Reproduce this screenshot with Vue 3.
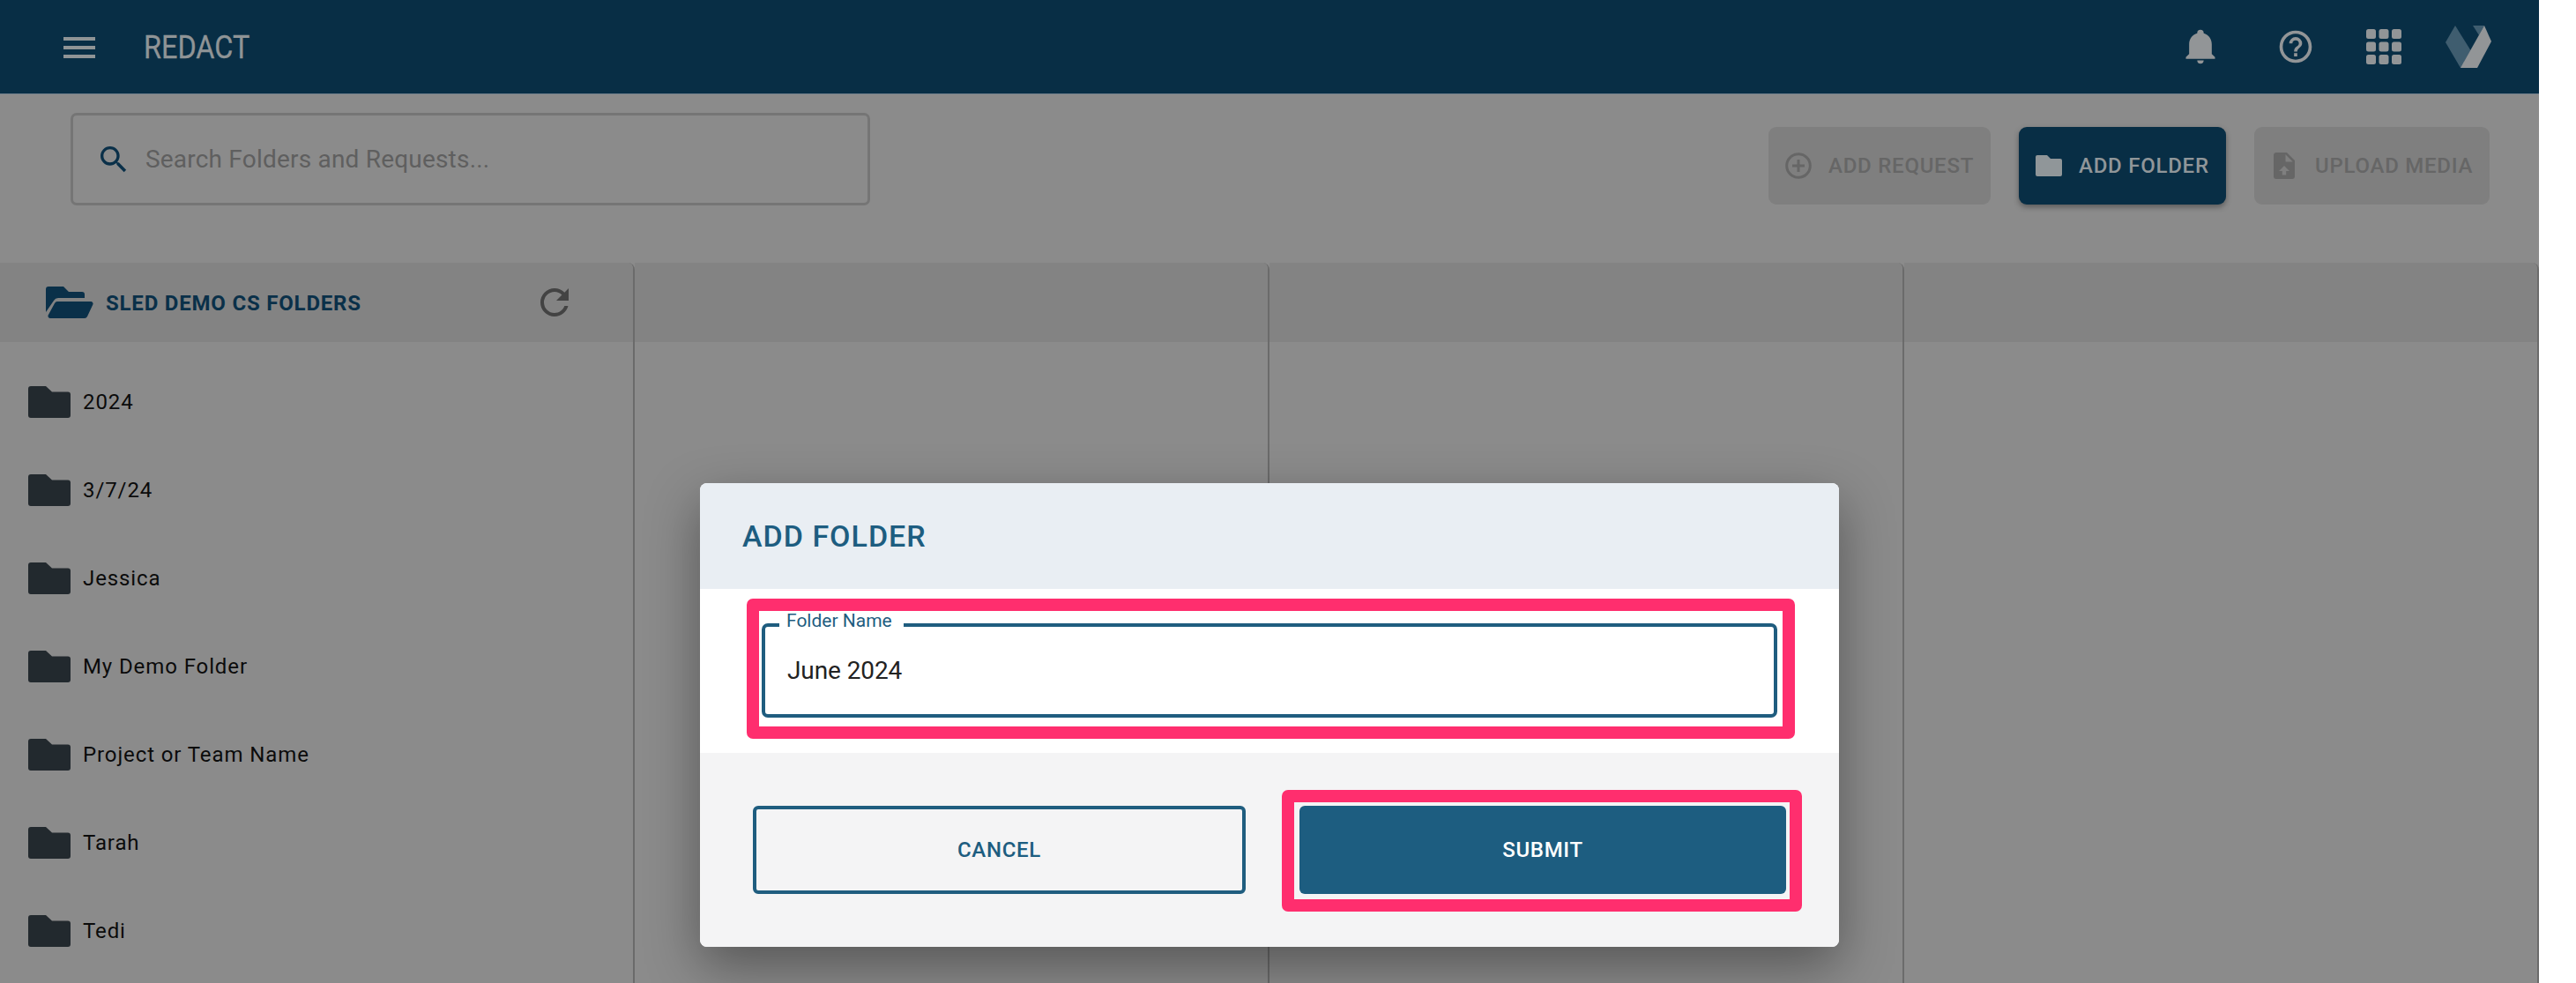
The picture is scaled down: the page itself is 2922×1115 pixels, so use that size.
<script setup>
const folders = ['2024', '3/7/24', 'Jessica', 'My Demo Folder', 'Project or Team Name', 'Tarah', 'Tedi']
const columns = [1, 2, 3]
const grid = [0, 1, 2]
</script>

<template>
  <div class="page">
    <header class="topbar">
      <div class="brand">
        <div class="burger"><span></span><span></span><span></span></div>
        <span class="title">REDACT</span>
      </div>
      <div class="top-icons">
        <svg class="bell" viewBox="0 0 24 24"><path d="M21,19V20H3V19L5,17V11C5,7.9 7.03,5.17 10,4.29C10,4.19 10,4.1 10,4A2,2 0 0,1 12,2A2,2 0 0,1 14,4C14,4.1 14,4.19 14,4.29C16.97,5.17 19,7.9 19,11V17L21,19M14,21A2,2 0 0,1 12,23A2,2 0 0,1 10,21"/></svg>
        <svg class="help" viewBox="0 0 24 24"><path d="M11,18H13V16H11V18M12,2A10,10 0 0,0 2,12A10,10 0 0,0 12,22A10,10 0 0,0 22,12A10,10 0 0,0 12,2M12,20C7.59,20 4,16.41 4,12C4,7.59 7.59,4 12,4C16.41,4 20,7.59 20,12C20,16.41 16.41,20 12,20M12,6A4,4 0 0,0 8,10H10A2,2 0 0,1 12,8A2,2 0 0,1 14,10C14,12 11,11.75 11,15H13C13,12.75 16,12.5 16,10A4,4 0 0,0 12,6Z"/></svg>
        <svg class="apps" viewBox="0 0 40 40">
          <template v-for="r in grid" :key="r">
            <rect v-for="c in grid" :key="c" :x="c * 14.5" :y="r * 14.5" width="11" height="11" rx="2.5"/>
          </template>
        </svg>
        <svg class="logo" viewBox="0 0 52 48">
          <polygon class="logo-dark" points="0,19 11,0 34,37 25,48 17,48"/>
          <polygon class="logo-dark" points="31,0 44,0 38,11"/>
          <polygon points="17,48 44,0 52,18 36,48"/>
        </svg>
      </div>
    </header>

    <section class="toolbar">
      <div class="search">
        <svg class="search-icon" viewBox="0 0 24 24"><path d="M9.5,3A6.5,6.5 0 0,1 16,9.5C16,11.11 15.41,12.59 14.44,13.73L14.71,14H15.5L20.5,19L19,20.5L14,15.5V14.71L13.73,14.44C12.59,15.41 11.11,16 9.5,16A6.5,6.5 0 0,1 3,9.5A6.5,6.5 0 0,1 9.5,3M9.5,5C7,5 5,7 5,9.5C5,12 7,14 9.5,14C12,14 14,12 14,9.5C14,7 12,5 9.5,5Z"/></svg>
        <span class="placeholder">Search Folders and Requests...</span>
      </div>
      <div class="actions">
        <div class="btn disabled btn-request">
          <svg class="ic-plus" viewBox="0 0 30 30"><circle cx="15" cy="15" r="13.3" fill="none" stroke="currentColor" stroke-width="3"/><path d="M15 8v14M8 15h14" stroke="currentColor" stroke-width="3"/></svg>
          <span>ADD REQUEST</span>
        </div>
        <div class="btn primary btn-folder">
          <svg class="ic-folder" viewBox="0 0 30 24"><path d="M2 0H13L17 4H28a2 2 0 0 1 2 2V22a2 2 0 0 1-2 2H2a2 2 0 0 1-2-2V2a2 2 0 0 1 2-2Z"/></svg>
          <span>ADD FOLDER</span>
        </div>
        <div class="btn disabled btn-upload">
          <svg class="ic-upload" viewBox="4 2 16 20"><path d="M13.5,16V19H10.5V16H8L12,12L16,16H13.5M13,9V3.5L18.5,9M6,2C4.89,2 4,2.89 4,4V20A2,2 0 0,0 6,22H18A2,2 0 0,0 20,20V8L14,2H6Z"/></svg>
          <span>UPLOAD MEDIA</span>
        </div>
      </div>
    </section>

    <main class="columns">
      <div class="column">
        <div class="col-head">
          <svg class="ic-open" viewBox="0 0 54 36">
            <path d="M3 0H20L26 6H41a3 3 0 0 1 3 3V13H14a6 6 0 0 0-5 3L0 29V3a3 3 0 0 1 3-3Z"/>
            <path d="M13 17H51a2.5 2.5 0 0 1 2.3 3.6L47 34a4 4 0 0 1-3 2H5a2.5 2.5 0 0 1-2.2-3.7L10 19a4 4 0 0 1 3-2Z"/>
          </svg>
          <span class="col-title">SLED DEMO CS FOLDERS</span>
          <svg class="ic-refresh" viewBox="0 0 24 24"><path d="M17.65,6.35C16.2,4.9 14.21,4 12,4A8,8 0 0,0 4,12A8,8 0 0,0 12,20C15.73,20 18.84,17.45 19.73,14H17.65C16.83,16.33 14.61,18 12,18A6,6 0 0,1 6,12A6,6 0 0,1 12,6C13.66,6 15.14,6.69 16.22,7.78L13,11H20V4L17.65,6.35Z"/></svg>
        </div>
        <ul class="list">
          <li v-for="name in folders" :key="name" class="row">
            <svg class="ic-row" viewBox="0 0 48 36"><path d="M3 0H20L27 6.5H45a3 3 0 0 1 3 3V33a3 3 0 0 1-3 3H3a3 3 0 0 1-3-3V3a3 3 0 0 1 3-3Z"/></svg>
            <span>{{ name }}</span>
          </li>
        </ul>
      </div>
      <div v-for="c in columns" :key="c" class="column">
        <div class="col-head"></div>
      </div>
    </main>

    <div class="overlay">
      <div class="dialog">
        <div class="dialog-head">ADD FOLDER</div>
        <div class="dialog-body">
          <div class="mark mark-field">
            <div class="field">
              <span class="field-label">Folder Name</span>
              <span class="field-value">June 2024</span>
            </div>
          </div>
        </div>
        <div class="dialog-foot">
          <div class="action cancel">CANCEL</div>
          <div class="mark mark-submit">
            <div class="action submit">SUBMIT</div>
          </div>
        </div>
      </div>
    </div>
  </div>
</template>

<style>
html, body { margin: 0; background: #fff; }
</style>

<style scoped>
.page {
  position: relative;
  width: 2880px;
  height: 1115px;
  overflow: hidden;
  background: #8b8b8b;
  font-family: Roboto, "Liberation Sans", sans-serif;
}
.topbar {
  height: 107px;
  box-sizing: border-box;
  background: #082e45;
  border-bottom: 1px solid #6f7f8b;
  display: flex;
  align-items: flex-start;
  justify-content: space-between;
  color: #8f9496;
}
.brand { display: flex; align-items: center; padding: 41px 0 0 72px; }
.burger { display: flex; flex-direction: column; gap: 6px; width: 36px; }
.burger span { display: block; height: 4px; background: #8f9496; }
.title {
  margin-left: 55px;
  font-size: 36px;
  line-height: 26px;
  transform: scaleX(0.9);
  transform-origin: left center;
  color: #8f9496;
  -webkit-text-stroke: 0.3px #8f9496;
}
.top-icons { position: relative; display: flex; align-items: flex-start; padding: 29px 54px 0 0; }
.top-icons svg { fill: #929597; display: block; }
.bell { width: 44px; height: 44px; margin: 1px 0 0 0; }
.help { width: 44px; height: 44px; margin: 2px 0 0 64px; }
.apps { width: 40px; height: 40px; margin: 4px 0 0 58px; }
.logo { width: 52px; height: 48px; margin-left: 50px; }
.top-icons .logo-dark { fill: #3f5d6f; }

.toolbar {
  height: 191px;
  display: flex;
  justify-content: space-between;
  align-items: flex-start;
  padding: 21px 56px 0 80px;
  box-sizing: border-box;
}
.search {
  width: 907px;
  height: 105px;
  box-sizing: border-box;
  border: 3px solid #757575;
  border-radius: 7px;
  display: flex;
  align-items: center;
  padding-left: 26px;
}
.search-icon { width: 40px; height: 40px; fill: #0a3049; flex: none; margin-top: 1px; }
.placeholder { margin-left: 16px; font-size: 28px; color: #5f5f5f; letter-spacing: 0.2px; }
.actions { display: flex; gap: 32px; padding-top: 16px; }
.btn {
  height: 88px;
  box-sizing: border-box;
  border-radius: 9px;
  display: flex;
  align-items: center;
  font-size: 24px;
  font-weight: 500;
  letter-spacing: 0.75px;
}
.btn span { white-space: nowrap; }
.disabled { background: #7f7f7f; color: #666; }
.primary { background: #082e45; color: #909699; box-shadow: 0 3px 6px rgba(0, 0, 0, 0.35); }
.btn-request { width: 252px; padding-left: 19px; gap: 19px; }
.btn-folder { width: 235px; padding-left: 19px; gap: 19px; }
.btn-upload { width: 267px; padding-left: 22px; gap: 23px; }
.ic-plus { width: 30px; height: 30px; flex: none; }
.ic-folder { width: 30px; height: 24px; fill: #909699; flex: none; }
.ic-upload { width: 24px; height: 30px; fill: #666; flex: none; }

.columns { display: grid; grid-template-columns: repeat(4, 720px); }
.column {
  height: 817px;
  box-sizing: border-box;
  border-right: 2px solid #6b6b6b;
  border-top-right-radius: 8px;
}
.col-head {
  height: 90px;
  background: #838383;
  border-top-right-radius: 6px;
  display: flex;
  align-items: center;
  position: relative;
  box-sizing: border-box;
  padding-left: 52px;
}
.ic-open { width: 54px; height: 36px; fill: #0a3049; flex: none; }
.col-title {
  margin-left: 14px;
  font-size: 24px;
  font-weight: 700;
  color: #0a3049;
  letter-spacing: 0.8px;
  white-space: nowrap;
  padding-top: 2px;
}
.ic-refresh { position: absolute; left: 605px; top: 21px; width: 48px; height: 48px; fill: #434343; }
.list { list-style: none; margin: 0; padding: 18px 0 0 32px; }
.row {
  height: 100px;
  display: flex;
  align-items: center;
  font-size: 24px;
  color: #0b0b0b;
  letter-spacing: 0.9px;
}
.ic-row { width: 48px; height: 36px; fill: #22292e; flex: none; }
.row span { margin-left: 14px; }

.overlay {
  position: absolute;
  inset: 0;
  display: flex;
  justify-content: center;
  align-items: flex-start;
  padding-top: 548px;
  box-sizing: border-box;
}
.dialog {
  width: 1292px;
  height: 526px;
  border-radius: 8px;
  overflow: hidden;
  background: #fff;
  box-shadow: 0 22px 60px rgba(0, 0, 0, 0.38);
  display: flex;
  flex-direction: column;
  flex: none;
}
.dialog-head {
  height: 120px;
  flex: none;
  box-sizing: border-box;
  padding-left: 48px;
  display: flex;
  align-items: center;
  background: #e9eef3;
  color: #1d5d80;
  font-size: 34px;
  font-weight: 500;
  letter-spacing: 1px;
}
.dialog-body { height: 186px; flex: none; box-sizing: border-box; padding: 11px 50px 0 53px; background: #fff; }
.mark { border: 14px solid #ff2e6e; border-radius: 7px; box-sizing: border-box; }
.mark-field { height: 159px; padding: 14px 6px 11px 3px; }
.field {
  position: relative;
  height: 107px;
  box-sizing: border-box;
  border: 4px solid #1f5d7f;
  border-radius: 7px;
  display: flex;
  align-items: center;
  padding-left: 25px;
}
.field-label {
  position: absolute;
  left: 16px;
  top: -17px;
  padding: 0 13px 0 8px;
  background: #fff;
  font-size: 21px;
  line-height: 20px;
  color: #1f5d7f;
}
.field-value { font-size: 28px; color: #222; letter-spacing: -0.1px; }
.dialog-foot {
  flex: 1;
  background: #f4f4f5;
  display: flex;
  align-items: flex-start;
  padding: 42px 0 0 60px;
}
.action {
  height: 100px;
  box-sizing: border-box;
  border-radius: 6px;
  display: flex;
  align-items: center;
  justify-content: center;
  font-size: 24px;
  font-weight: 500;
  letter-spacing: 0.7px;
}
.cancel { width: 559px; margin-top: 18px; border: 4px solid #1f5d7f; color: #1d5d80; }
.mark-submit { width: 590px; height: 138px; margin-left: 41px; padding: 4px 4px 0 6px; }
.submit { background: #1d5d80; color: #fff; }
</style>
